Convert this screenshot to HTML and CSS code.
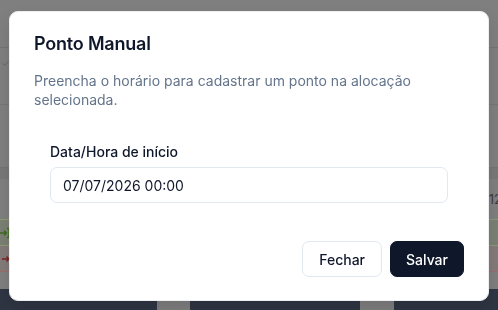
FILE: index.html
```html
<!DOCTYPE html>
<html lang="pt-BR">
<head>
<meta charset="utf-8">
<title>Ponto Manual</title>
<link rel="stylesheet" href="styles.css">
</head>
<body>
<div class="page">
  <div class="row r-top"></div>
  <div class="row r-a"><span class="check">✓</span></div>
  <div class="row r-b"></div>
  <div class="row r-band"></div>
  <div class="row r-c"><span class="num">12</span></div>
  <div class="row r-in">
    <svg class="ico" width="10" height="12" viewBox="0 0 10 12"><path d="M0 6h6M4 3.5L6.5 6 4 8.5M7 1.5h2v9H7" fill="none" stroke="#3d6b1f" stroke-width="1.3"/></svg>
  </div>
  <div class="row r-out">
    <svg class="ico" width="10" height="12" viewBox="0 0 10 12"><path d="M2 6h7M6.5 3.5L9 6 6.5 8.5" fill="none" stroke="#7a2222" stroke-width="1.3"/></svg>
  </div>
  <div class="row r-gap"></div>
  <div class="bar">
    <div class="seg seg-a"></div>
    <div class="seg seg-b"></div>
    <div class="seg seg-c"></div>
  </div>
</div>

<div class="overlay">
  <div class="dialog" role="dialog">
    <div class="header">
      <h2 class="title">Ponto Manual</h2>
      <p class="desc">Preencha o horário para cadastrar um ponto na alocação selecionada.</p>
    </div>
    <div class="form">
      <label class="label" for="inicio">Data/Hora de início</label>
      <div class="input" id="inicio">07/07/2026 00:00</div>
    </div>
    <div class="footer">
      <button class="btn btn-outline">Fechar</button>
      <button class="btn btn-primary">Salvar</button>
    </div>
  </div>
</div>
</body>
</html>
```

FILE: styles.css
```css
* { box-sizing: border-box; }
html, body { margin: 0; padding: 0; }
body {
  width: 498px;
  height: 310px;
  overflow: hidden;
  font-family: Inter, "Noto Sans", sans-serif;
  background: #7f7f7f;
}

.page {
  display: flex;
  flex-direction: column;
  height: 310px;
}
.row { position: relative; }
.r-top { height: 48px; border-bottom: 1px solid #747474; }
.r-a { height: 57px; border-bottom: 1px solid #767676; }
.check { font-size: 10px; color: #6c6c6c; padding-left: 1px; line-height: 30px; }
.r-b { height: 63px; border-bottom: 1px solid #747474; }
.r-band { height: 11px; background: #787878; }
.r-c { height: 40px; display: flex; justify-content: flex-end; align-items: center; }
.num { font-size: 13px; color: #3b3b3b; margin-right: -4px; }
.r-in {
  height: 27px;
  background: #7c8074;
  border-top: 1px solid #8a9a72;
  border-bottom: 1px solid #8a9a72;
  display: flex; align-items: center;
}
.r-out {
  height: 26px;
  background: #847a7a;
  border-bottom: 1px solid #9a6c6c;
  display: flex; align-items: center;
}
.r-gap { height: 17px; }
.bar {
  flex: 1;
  display: flex;
}
.seg { background: #2f3643; border-radius: 6px 6px 0 0; }
.seg-a { width: 157px; border-radius: 0 6px 0 0; }
.seg-b { width: 170px; margin-left: 33px; }
.seg-c { flex: 1; margin-left: 34px; border-radius: 6px 0 0 0; }

.overlay {
  position: fixed;
  inset: 0;
  display: flex;
  justify-content: center;
  align-items: flex-start;
  padding-top: 11px;
}
.dialog {
  width: 480px;
  background: #ffffff;
  border: 1px solid #eceef1;
  border-radius: 9px;
  padding: 23px 24px 23px 24px;
  box-shadow: 0 8px 16px rgba(0,0,0,0.12);
}
.header { display: flex; flex-direction: column; }
.title {
  margin: 0;
  font-size: 18px;
  line-height: 18px;
  font-weight: 600;
  color: #0f172a;
  letter-spacing: -0.2px;
}
.desc {
  margin: 18px 0 0 0;
  font-size: 14px;
  line-height: 19px;
  color: #64748b;
}
.form {
  display: flex;
  flex-direction: column;
  padding: 0 16px;
  margin-top: 36px;
}
.label {
  font-size: 14px;
  line-height: 14px;
  font-weight: 500;
  color: #0f172a;
}
.input {
  margin-top: 8px;
  height: 36px;
  border: 1px solid #e2e8f0;
  border-radius: 7px;
  padding: 0 12px;
  display: flex;
  align-items: center;
  font-size: 14px;
  color: #0f172a;
}
.footer {
  display: flex;
  justify-content: flex-end;
  gap: 8px;
  margin-top: 38px;
}
.btn {
  font-family: inherit;
  height: 36px;
  padding: 0 16px;
  border-radius: 7px;
  font-size: 14px;
  font-weight: 500;
  cursor: pointer;
}
.btn-outline {
  background: #ffffff;
  border: 1px solid #e2e8f0;
  color: #0f172a;
}
.btn-primary {
  padding: 0 15px;
  background: #0f172a;
  border: 1px solid #0f172a;
  color: #ffffff;
}
```
